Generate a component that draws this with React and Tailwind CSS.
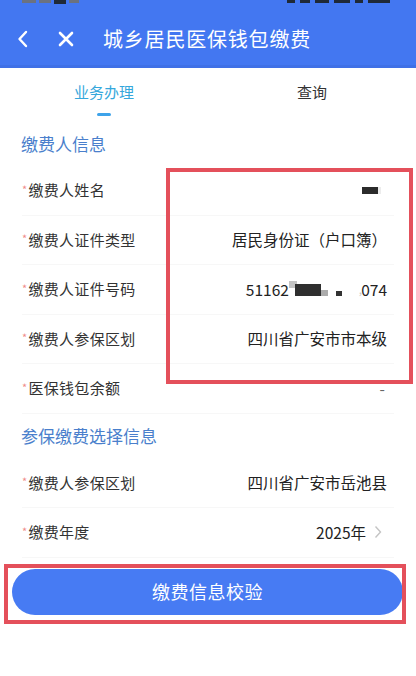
import React from "react";

// rows of the form

const payerRows = [
  { label: "缴费人姓名", value: "name" },
  { label: "缴费人证件类型", value: "居民身份证（户口簿）" },
  { label: "缴费人证件号码", value: "id" },
  { label: "缴费人参保区划", value: "四川省广安市市本级" },
  { label: "医保钱包余额", value: "-" },
];

const choiceRows = [
  { label: "缴费人参保区划", value: "四川省广安市岳池县" },
  { label: "缴费年度", value: "2025年", arrow: true },
];

function Value({ value }) {
  if (value === "name") {
    return (
      <span className="flex items-center mr-[6px]">
        <span className="block w-[16px] h-[7px] bg-[#2b2b2b]"></span>
        <span className="block w-[3px] h-[7px] bg-[#ececec]"></span>
      </span>
    );
  }
  if (value === "id") {
    return (
      <span className="flex items-center text-[#222]">
        <span>51162</span>
        <span className="relative block w-[70px] h-[16px]">
          <span className="absolute left-[0px] top-[0px] w-[8px] h-[7px] bg-[#c4c4c4]"></span>
          <span className="absolute left-[6px] top-[3px] w-[26px] h-[12px] bg-[#2f2f2f]"></span>
          <span className="absolute left-[32px] top-[9px] w-[7px] h-[6px] bg-[#ababab]"></span>
          <span className="absolute left-[47px] top-[10px] w-[6px] h-[5px] bg-[#333]"></span>
        </span>
        <span className="text-[#c8c8c8] text-[12px] -mr-[1px]">,</span>
        <span>074</span>
      </span>
    );
  }
  if (value === "-") {
    return <span className="text-[#666] pr-[2px]">-</span>;
  }
  return <span className="text-[#222]">{value}</span>;
}

function Row({ row }) {
  return (
    <div className="h-[49.5px] mx-[22px] flex items-center justify-between border-b border-[#f7f7f7]">
      <div className="flex items-center text-[15px] text-[#333] tracking-[0.3px]">
        <span className="text-[11px] text-[#f08a8a] mr-[1px] -mt-[3px]">*</span>
        <span>{row.label}</span>
      </div>
      <div className="flex items-center text-[15.5px] pr-[7px]">
        <Value value={row.value} />
        {row.arrow && (
          <svg width="8" height="14" viewBox="0 0 8 14" className="ml-[8px] mr-[5px]">
            <path d="M1.5 1.5 L6.5 7 L1.5 12.5" fill="none" stroke="#c4c4c4" strokeWidth="1.4" />
          </svg>
        )}
      </div>
    </div>
  );
}

export default function App() {
  return (
    <div
      className="relative w-[416px] h-[676px] bg-white overflow-hidden"
      style={{ fontFamily: '"Noto Sans CJK SC", "Noto Sans", sans-serif' }}
    >
      {/* header */}
      <div className="bg-[#4377f1] h-[68px] border-b-[3px] border-[#3f70e6]">
        <div className="h-[12px] flex items-start justify-between px-[22px]">
          <div className="flex gap-[3px]">
            <span className="block w-[14px] h-[3px] bg-[#6b7280]"></span>
            <span className="block w-[12px] h-[3px] bg-[#6b7280]"></span>
            <span className="block w-[12px] h-[4px] bg-[#1f2937]"></span>
            <span className="block w-[10px] h-[3px] bg-[#6b7280]"></span>
          </div>
          <div className="flex gap-[5px] mr-[4px]">
            <span className="block w-[8px] h-[3px] bg-[#1f2937]"></span>
            <span className="block w-[10px] h-[3px] bg-[#1f2937]"></span>
            <span className="block w-[14px] h-[3px] bg-[#1f2937]"></span>
            <span className="block w-[16px] h-[3px] bg-[#1f2937]"></span>
            <span className="block w-[8px] h-[3px] bg-[#1f2937]"></span>
            <span className="block w-[22px] h-[3px] bg-[#1f2937]"></span>
          </div>
        </div>
        <div className="h-[53px] flex items-center">
          <svg width="12" height="18" viewBox="0 0 12 18" className="ml-[17px]">
            <path d="M9 2 L2.5 9 L9 16" fill="none" stroke="white" strokeWidth="2.4" strokeLinecap="round" strokeLinejoin="round" />
          </svg>
          <svg width="16" height="16" viewBox="0 0 16 16" className="ml-[29px]">
            <path d="M2 2 L14 14 M14 2 L2 14" stroke="white" strokeWidth="2.6" strokeLinecap="round" />
          </svg>
          <span className="ml-[29px] text-white text-[20px] tracking-[0.8px]">城乡居民医保钱包缴费</span>
        </div>
      </div>

      {/* tabs */}
      <div className="h-[54px] flex">
        <div className="flex-1 flex flex-col items-center pt-[14px]">
          <span className="text-[15px] leading-[20px] text-[#35a7dc]">业务办理</span>
          <span className="block mt-[11px] w-[14px] h-[3px] rounded-full bg-[#3ea3ea]"></span>
        </div>
        <div className="flex-1 flex flex-col items-center pt-[14px]">
          <span className="text-[15px] leading-[20px] text-[#333]">查询</span>
        </div>
      </div>

      {/* payer info */}
      <div className="h-[44px] flex items-center px-[21px]">
        <span className="text-[17px] text-[#4a7fcc]">缴费人信息</span>
      </div>
      {payerRows.map((row, i) => (
        <Row key={i} row={row} />
      ))}

      {/* choice info */}
      <div className="h-[45px] flex items-center px-[21px]">
        <span className="text-[17px] text-[#4a7fcc]">参保缴费选择信息</span>
      </div>
      {choiceRows.map((row, i) => (
        <Row key={i} row={row} />
      ))}

      {/* button */}
      <div className="mt-[11px] ml-[12px] mr-[13px]">
        <button className="w-full h-[46px] rounded-full bg-[#477bf3] text-white text-[18px] tracking-[0.5px]">
          缴费信息校验
        </button>
      </div>

      {/* red annotation boxes */}
      <div className="absolute left-[166px] top-[168px] w-[247px] h-[216px] border-[4px] border-[#e4505b]"></div>
      <div className="absolute left-[4px] top-[564px] w-[402px] h-[60px] border-[4px] border-[#e4505b]"></div>
    </div>
  );
}
